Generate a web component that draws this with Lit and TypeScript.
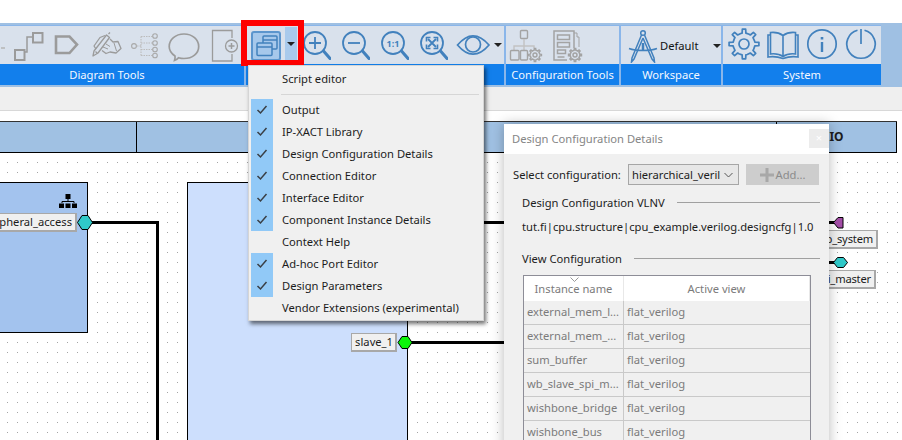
import { LitElement, html, css } from 'lit'
import { customElement } from 'lit/decorators.js'

// builds a cog outline centred on cx,cy
const gearPath = (cx: number, cy: number, ro: number, ri: number, teeth: number) => {
  const step = (Math.PI * 2) / teeth
  const pts: string[] = []
  for (let i = 0; i < teeth; i++) {
    const a = i * step - Math.PI / 2
    const w = step * 0.2
    const list: [number, number][] = [
      [ri, a - step / 2 + w * 0.6],
      [ri, a - w * 1.1],
      [ro, a - w * 0.7],
      [ro, a + w * 0.7],
      [ri, a + w * 1.1],
    ]
    for (const [r, t] of list) {
      pts.push(`${(cx + r * Math.cos(t)).toFixed(2)} ${(cy + r * Math.sin(t)).toFixed(2)}`)
    }
  }
  return 'M' + pts.join('L') + 'Z'
}

const GRAY = '#9b9b9b'
const BLUE = '#4281bd'

const stub = html`<svg width="32" height="32" viewBox="0 0 32 32">
  <path d="M28 19h4" stroke="#b5b5b5" stroke-width="1.5" fill="none" />
</svg>`

const connector = html`<svg width="32" height="32" viewBox="0 0 32 32" fill="none" stroke=${GRAY} stroke-width="2">
  <rect x="3" y="21" width="9.5" height="10" />
  <rect x="21" y="4" width="9.5" height="9.5" />
  <path d="M12 23h3V8h6" stroke-width="1.5" />
</svg>`

const tag = html`<svg width="32" height="32" viewBox="0 0 32 32" fill="none" stroke=${GRAY} stroke-width="2.6">
  <path d="M5 7.500h13.500l7.500 8-7.500 8.500H5z" />
</svg>`

const signHand = html`<svg width="32" height="32" viewBox="0 0 32 32" fill="none" stroke=${GRAY} stroke-width="1.300" stroke-linejoin="round">
  <path d="M3 27l1-5L16.500 6l3 2.500L8 24z" />
  <path d="M18.500 5l1.500-1.500M5.500 22.500l2 2" />
  <path d="M6 20L4 17 10 8.500l5-2M20 10l3 3 5-.5 3 7-5 4.500-6-1-4 1.500-4-3" />
  <path d="M13 18l5 2M16 15l4 2.500M24 14l2.500 8" stroke-width="1" />
</svg>`

const tree = html`<svg width="32" height="32" viewBox="0 0 32 32" fill="none" stroke="#a9a9a9" stroke-width="1.100">
  <circle cx="5" cy="17" r="2.400" />
  <path d="M8 17h4M12 7.500v19M12 7.500h12M12 14h12M12 20.500h12M12 26.500h12" stroke="#bcbcbc" stroke-dasharray="1.500 1" />
  <circle cx="26" cy="7" r="2.300" />
  <circle cx="26" cy="14" r="2.300" />
  <circle cx="26" cy="20.500" r="2.300" />
  <circle cx="26" cy="26.500" r="2.300" />
</svg>`

const bubble = html`<svg width="32" height="34" viewBox="0 0 32 34" fill="none" stroke=${GRAY} stroke-width="1.700">
  <path d="M7 27c-3.500-2.300-5.800-5.500-5.800-9.500C1.200 10.500 7.500 5 16 5s14.700 5.500 14.700 12.500S24.500 29.500 16 29.500c-2 0-3.800-.3-5.500-.8C9.500 30 8.500 31 6.500 31.500 7 30 7.300 28.500 7 27z" />
</svg>`

const pagePlus = html`<svg width="32" height="34" viewBox="0 0 32 34" fill="none" stroke=${GRAY} stroke-width="1.300">
  <path d="M25 9V1.500H5.500V32H25v-7" />
  <circle cx="24.500" cy="17" r="6" />
  <path d="M21.500 17h6M24.500 14v6" stroke-width="1.500" />
</svg>`

const windows = html`<svg width="28" height="28" viewBox="0 0 28 28" fill="none" stroke=${BLUE} stroke-width="1.500">
  <rect x="11" y="4" width="14" height="13" rx="1" />
  <path d="M11 8h14" />
  <rect x="5" y="11" width="15" height="12.500" rx="1" fill="#a6c8eb" />
  <path d="M5 15h15" />
</svg>`

const lens = (inner: unknown) => html`<svg width="32" height="32" viewBox="0 0 32 32" fill="none" stroke=${BLUE} stroke-width="1.800">
  <circle cx="16" cy="14" r="11" />
  <path d="M24.500 22l6.500 7.500" stroke-width="3" stroke-linecap="round" />
  ${inner}
</svg>`

const zoomIn = lens(html`<svg x="0" y="0" overflow="visible"><path d="M10 14h12M16 8v12" /></svg>`)
const zoomOut = lens(html`<svg x="0" y="0" overflow="visible"><path d="M10 14h12" /></svg>`)
const zoomOne = lens(
  html`<svg x="0" y="0" overflow="visible"><text x="16" y="17.500" text-anchor="middle" class="ratio">1:1</text></svg>`
)
const zoomFit = lens(
  html`<svg x="0" y="0" overflow="visible"><path d="M12 10l8 8M20 10l-8 8" /><path d="M10.500 12.500v-4h4M17.500 8.500h4v4M21.500 15.500v4h-4M14.500 19.500h-4v-4" stroke-width="1.600" /></svg>`
)

const eye = html`<svg width="36" height="32" viewBox="0 0 36 32" fill="none" stroke=${BLUE} stroke-width="1.700">
  <path d="M2.500 16C8 9.500 13 6.800 18 6.800S28.500 9.500 34 16c-5.500 6.500-11 9.200-16 9.200S8 22.500 2.500 16z" />
  <circle cx="18" cy="15.500" r="7.500" />
</svg>`

const gearSmall = (cx: number, cy: number) => html`<svg x="0" y="0" overflow="visible">
  <path d=${gearPath(cx, cy, 6.500, 4.800, 8)} />
  <circle cx=${cx} cy=${cy} r="2" />
</svg>`

const cfgTree = html`<svg width="36" height="34" viewBox="0 0 36 34" fill="none" stroke="#a3a3a3" stroke-width="1.400">
  <rect x="11.500" y="1.500" width="7" height="8" rx="1" />
  <path d="M15 10v7M5 21v-4h20v2M15 17v4" stroke="#c2c2c2" />
  <rect x="1.500" y="21.500" width="8.500" height="9.500" rx="1" />
  <rect x="11.500" y="21.500" width="7" height="9.500" rx="1" />
  ${gearSmall(26, 26)}
</svg>`

const cfgDoc = html`<svg width="34" height="34" viewBox="0 0 34 34" fill="none" stroke="#a3a3a3" stroke-width="1.500">
  <path d="M22 19V2H2v29h13" />
  <path d="M22 4h3v4h2v10" stroke-width="1" />
  <rect x="5.500" y="6" width="12" height="4.500" />
  <rect x="5.500" y="13.500" width="12" height="4.500" />
  <rect x="5.500" y="21" width="8" height="3.500" />
  <path d="M5.500 28h7" />
  ${gearSmall(23, 26)}
</svg>`

const compass = html`<svg width="30" height="34" viewBox="0 0 30 34" fill="none" stroke=${BLUE} stroke-width="1.500">
  <circle cx="15" cy="4" r="2.300" />
  <path d="M13.500 6L4 29l-.5 4 2.500-3L15 9M16.500 6L26 29l.5 4-2.500-3L15 9" />
  <path d="M1 19.500c4 1.500 8 2 14 2s10-.5 14-2" />
  <path d="M15 14v7" stroke-width="2.500" />
</svg>`

const bigGear = html`<svg width="32" height="32" viewBox="0 0 32 32" fill="none" stroke=${BLUE} stroke-width="1.700">
  <path d=${gearPath(16, 16, 15, 11, 8)} stroke-linejoin="round" />
  <circle cx="16" cy="16" r="5" />
</svg>`

const book = html`<svg width="32" height="32" viewBox="0 0 32 32" fill="none" stroke=${BLUE} stroke-width="1.600">
  <path d="M16 7.500C12 4.500 8 4 3.500 4.500V26c4.500-.5 9 0 12.500 2.500 3.500-2.500 8-3 12.500-2.500V4.500C24 4 20 4.500 16 7.500zM16 7.500v21" />
  <path d="M3.500 7H1v22c5-.8 10-.3 15 1.500 5-1.800 10-2.300 15-1.500V7h-2.500" />
</svg>`

const info = html`<svg width="32" height="32" viewBox="0 0 32 32" fill="none" stroke=${BLUE} stroke-width="1.700">
  <circle cx="16" cy="16" r="14.200" />
  <path d="M16 14v10" stroke-width="2.400" />
  <path d="M16 9v2.500" stroke-width="2.600" />
</svg>`

const power = html`<svg width="32" height="32" viewBox="0 0 32 32" fill="none" stroke=${BLUE} stroke-width="1.700">
  <path d="M12.500 2.300A14.200 14.200 0 1 0 19.500 2.300" />
  <path d="M16 1v15" />
</svg>`

const caret = html`<span class="caret"></span>`

const menuItems: [string, boolean][] = [
  ['Output', true],
  ['IP-XACT Library', true],
  ['Design Configuration Details', true],
  ['Connection Editor', true],
  ['Interface Editor', true],
  ['Component Instance Details', true],
  ['Context Help', false],
  ['Ad-hoc Port Editor', true],
  ['Design Parameters', true],
  ['Vendor Extensions (experimental)', false],
]

const instances = [
  'external_mem_l...',
  'external_mem_...',
  'sum_buffer',
  'wb_slave_spi_m...',
  'wishbone_bridge',
  'wishbone_bus',
]

@customElement('app-root')
export class AppRoot extends LitElement {
  static styles = css`
    :host {
      display: block;
      position: relative;
      width: 902px;
      height: 440px;
      overflow: hidden;
      background: #fff;
      font: 11.2px 'Noto Sans', sans-serif;
      color: #1c1c1c;
    }
    .ribbon {
      display: flex;
      margin-top: 23px;
      height: 64px;
      padding-top: 2px;
      box-sizing: border-box;
      background: #9fc0e3;
    }
    .group {
      display: flex;
      flex-direction: column;
      height: 60px;
      box-sizing: border-box;
      border-right: 2px solid #8ab6ea;
    }
    .tools {
      display: flex;
      align-items: flex-start;
      height: 39px;
      box-sizing: border-box;
      padding-top: 3px;
      background: #d9e1ec;
      border-top: 1px solid #8ab6ea;
    }
    .tools svg {
      flex: none;
      display: block;
    }
    .label {
      height: 21px;
      line-height: 22px;
      text-align: center;
      color: #f4f8ff;
      background: #127fec;
    }
    .diagram {
      width: 276px;
      margin-left: -30px;
    }
    .diagram .tools {
      gap: 7px;
      padding-left: 3px;
    }
    .view {
      width: 260px;
    }
    .view .tools {
      padding-left: 0;
    }
    .win-btn {
      flex: none;
      display: flex;
      align-items: center;
      justify-content: center;
      box-sizing: border-box;
      width: 30px;
      height: 30px;
      margin: 2px 0 0 5px;
      background: #a6c8eb;
      border: 2px solid #5b95cd;
      border-radius: 3px;
    }
    .win-drop {
      flex: none;
      display: flex;
      align-items: center;
      justify-content: center;
      width: 12px;
      height: 34px;
      margin: -2px 2px 0 4px;
      background: #a9caec;
    }
    .view .zoomers {
      display: flex;
      gap: 7px;
    }
    .caret {
      flex: none;
      width: 0;
      height: 0;
      border: 4px solid transparent;
      border-top: 4px solid #222;
      border-bottom: 0;
    }
    .view .caret.eye-caret {
      margin: 14px 0 0 3px;
    }
    .config {
      width: 115px;
    }
    .config .tools {
      padding-left: 3px;
      gap: 7px;
    }
    .workspace {
      width: 102px;
    }
    .workspace .tools {
      padding-left: 7px;
    }
    .workspace .name {
      width: 54px;
      margin: 9px 0 0 2px;
      color: #111;
    }
    .workspace .caret {
      margin: 15px 0 0 0;
    }
    .system {
      width: 158px;
      border-right: 0;
    }
    .system .tools {
      gap: 7px;
      padding: 2px 0 0 5px;
    }
    .subbar {
      height: 23px;
      background: #efefef;
      border-bottom: 1px solid #d8d8d8;
    }
    .headers {
      display: flex;
      margin-top: 10px;
      width: 897px;
      height: 32px;
      box-sizing: border-box;
      background: #a0c1e3;
      border-top: 1px solid #333;
      border-bottom: 1px solid #000;
    }
    .col {
      flex: none;
      box-sizing: border-box;
      border-right: 1.500px solid #000;
      font: 700 12px/30px 'Noto Sans', sans-serif;
      text-align: center;
    }
    .canvas {
      position: relative;
      height: 288px;
      width: 898px;
      background-image: radial-gradient(circle at 0.5px 0.5px, #a4a4a4 0.6px, transparent 0.6px);
      background-size: 10px 10px;
      background-position: 7px 9px;
    }
    .block {
      position: absolute;
      box-sizing: border-box;
      border: 1px solid #000;
    }
    .block.left {
      left: -20px;
      top: 29px;
      width: 108px;
      height: 151px;
      background: #a3c3ee;
    }
    .block.right {
      left: 187px;
      top: 29px;
      width: 221px;
      height: 300px;
      background: #cddffd;
    }
    .hier {
      position: absolute;
      left: 59px;
      top: 41px;
    }
    .wires {
      position: absolute;
      left: 0;
      top: 0;
    }
    .pin {
      position: absolute;
      box-sizing: border-box;
      height: 19px;
      line-height: 15px;
      padding: 0 3px 0 4px;
      background: #f0f0f0;
      border: 1px solid #a8a8a8;
      border-width: 1px 2px 2px 1px;
      white-space: nowrap;
    }
    .pin.access {
      right: 821px;
      top: 60px;
    }
    .pin.slave {
      right: 501px;
      top: 180px;
      padding: 0 2px 0 3px;
    }
    .pin.sys {
      right: 20px;
      top: 77px;
      letter-spacing: -0.2px;
    }
    .pin.mst {
      right: 22px;
      top: 117px;
      letter-spacing: -0.2px;
    }
    .highlight {
      position: absolute;
      left: 241px;
      top: 20px;
      width: 63px;
      height: 46px;
      box-sizing: border-box;
      border: 6px solid #fe0000;
    }
    .menu {
      position: absolute;
      left: 248px;
      top: 65px;
      width: 236px;
      box-sizing: border-box;
      padding: 2px 2px 1px 2px;
      background: #f0f0f0;
      border: 1px solid #d5d5d5;
      box-shadow: 2px 3px 4px rgba(0, 0, 0, 0.55);
    }
    .item {
      display: flex;
      align-items: center;
      height: 22px;
    }
    .item-text {
      margin-top: -2px;
    }
    .check {
      flex: none;
      display: flex;
      align-items: center;
      justify-content: center;
      width: 22px;
      height: 22px;
      margin-right: 9px;
    }
    .on .check {
      background: #91c9f7;
    }
    .rule {
      height: 1px;
      margin: 4px 2px 4px 30px;
      background: #d6d6d6;
    }
    .dialog {
      position: absolute;
      left: 504px;
      top: 124px;
      width: 325px;
      height: 330px;
      background: #f0f0f0;
      box-shadow: 0 0 12px rgba(0, 0, 0, 0.28);
    }
    .title {
      display: flex;
      align-items: center;
      justify-content: space-between;
      box-sizing: border-box;
      height: 30px;
      padding: 0 0 2px 8px;
      background: #fff;
      color: #858585;
    }
    .close {
      width: 20px;
      height: 19px;
      line-height: 18px;
      text-align: center;
      color: #fff;
      background: #ececec;
    }
    .select-row {
      display: flex;
      align-items: center;
      margin: 10px 10px 0 9px;
      height: 21px;
    }
    .select-label {
      flex: none;
      width: 115px;
      white-space: nowrap;
    }
    .select {
      flex: none;
      display: flex;
      align-items: center;
      justify-content: space-between;
      box-sizing: border-box;
      width: 111px;
      height: 21px;
      padding: 0 5px 0 3px;
      border: 1px solid #a6a6a6;
      background: #e7e7e7;
      white-space: nowrap;
    }
    .add {
      flex: none;
      display: flex;
      align-items: center;
      justify-content: center;
      gap: 2px;
      width: 73px;
      height: 21px;
      margin-left: 7px;
      color: #8b8b8b;
      background: #cdcdcd;
    }
    .section {
      display: flex;
      align-items: center;
      gap: 12px;
      margin: 0 9px 0 18px;
      height: 18px;
    }
    .section::after {
      content: '';
      flex: 1;
      height: 1px;
      background: #a0a0a0;
    }
    .first {
      margin-top: 8px;
    }
    .vlnv {
      margin: 7px 0 0 18px;
      height: 18px;
      line-height: 18px;
      white-space: nowrap;
    }
    .second {
      margin-top: 13px;
    }
    .table {
      margin: 8px 0 0 19px;
      width: 288px;
      box-sizing: border-box;
      border: 1px solid #8d8d97;
      color: #7b7b7b;
    }
    .row {
      display: grid;
      grid-template-columns: 100px 1fr;
      height: 24px;
      line-height: 21px;
      box-sizing: border-box;
      border-bottom: 1px solid #c9c9c9;
    }
    .row > div {
      padding-left: 3px;
      border-right: 1px solid #c9c9c9;
      white-space: nowrap;
      overflow: hidden;
    }
    .row > div:last-child {
      border-right: 0;
    }
    .row.head {
      position: relative;
      height: 25px;
      line-height: 25px;
      background: #fff;
      border-bottom: 0;
    }
    .row.head > div {
      padding: 0;
      text-align: center;
      border-right-color: #e8e8e8;
    }
    .sort {
      position: absolute;
      left: 46px;
      top: 1px;
    }
    .ratio {
      font: 700 9px 'Noto Sans', sans-serif;
      fill: #4281bd;
      stroke: none;
    }
  `

  render() {
    return html`
      <div class="ribbon">
        <div class="group diagram">
          <div class="tools">${stub}${connector}${tag}${signHand}${tree}${bubble}${pagePlus}</div>
          <div class="label">Diagram Tools</div>
        </div>
        <div class="group view">
          <div class="tools">
            <div class="win-btn">${windows}</div>
            <div class="win-drop">${caret}</div>
            <div class="zoomers">${zoomIn}${zoomOut}${zoomOne}${zoomFit}${eye}</div>
            <span class="caret eye-caret"></span>
          </div>
          <div class="label">View Tools</div>
        </div>
        <div class="group config">
          <div class="tools">${cfgTree}${cfgDoc}</div>
          <div class="label">Configuration Tools</div>
        </div>
        <div class="group workspace">
          <div class="tools">
            ${compass}
            <div class="name">Default</div>
            ${caret}
          </div>
          <div class="label">Workspace</div>
        </div>
        <div class="group system">
          <div class="tools">${bigGear}${book}${info}${power}</div>
          <div class="label">System</div>
        </div>
      </div>
      <div class="subbar"></div>
      <div class="headers">
        <div class="col" style="width:137px"></div>
        <div class="col" style="width:320px"></div>
        <div class="col" style="width:320px"></div>
        <div class="col" style="width:120px">IO</div>
      </div>
      <div class="canvas">
        <div class="block left"></div>
        <div class="block right"></div>
        <svg class="hier" width="18" height="14" viewBox="0 0 18 14">
          <rect x="6.500" y="0" width="5" height="5" />
          <path d="M9 5v3M3 9V7.500h12V9" stroke="#000" fill="none" />
          <rect x="0" y="9.500" width="5" height="4.500" />
          <rect x="6.500" y="9.500" width="5" height="4.500" />
          <rect x="13" y="9.500" width="5" height="4.500" />
        </svg>
        <svg class="wires" width="898" height="288" viewBox="0 0 898 288" fill="none" stroke="#000">
          <path d="M92 69.500h65.500V288" stroke-width="3" />
          <path d="M410 69.500h100M410 189.500h100" stroke-width="3" />
          <path d="M825 69.500h10M825 109.500h10" stroke-width="3" />
          <polygon points="77.500,69.500 82,62.500 88,62.500 92.500,69.500 88,76.500 82,76.500" fill="#2fc9c9" stroke-width="1" />
          <polygon points="398,189.500 402,183.500 408,183.500 412,189.500 408,195.500 402,195.500" fill="#0bf50b" stroke-width="1" />
          <polygon points="833.500,69.500 838,64.500 843,64.500 843,75 838,75" fill="#a44ea8" stroke-width="1" />
          <polygon points="833.500,109.500 837.500,104.500 843.500,104.500 847.500,109.500 843.500,114.500 837.500,114.500" fill="#2fc9c9" stroke-width="1" />
        </svg>
        <div class="pin access">pheral_access</div>
        <div class="pin slave">slave_1</div>
        <div class="pin sys">p_system</div>
        <div class="pin mst">i_master</div>
      </div>

      <div class="highlight"></div>

      <div class="menu">
        <div class="item"><span class="check"></span><span class="item-text">Script editor</span></div>
        <div class="rule"></div>
        ${menuItems.map(
          ([name, on]) => html`<div class="item ${on ? 'on' : ''}">
            <span class="check">
              ${on
                ? html`<svg width="12" height="10" viewBox="0 0 12 10" fill="none" stroke="#3a3f45" stroke-width="1.500">
                    <path d="M1.500 5l3 3 6-7" />
                  </svg>`
                : ''}
            </span>
            <span class="item-text">${name}</span>
          </div>`
        )}
      </div>

      <div class="dialog">
        <div class="title">Design Configuration Details<span class="close">×</span></div>
        <div class="select-row">
          <span class="select-label">Select configuration:</span>
          <div class="select">
            hierarchical_veril
            <svg width="9" height="6" viewBox="0 0 9 6" fill="none" stroke="#555">
              <path d="M.5 1l4 4 4-4" />
            </svg>
          </div>
          <div class="add">
            <svg width="14" height="14" viewBox="0 0 14 14" fill="none" stroke="#a8a8a8" stroke-width="3">
              <path d="M0 7h14M7 0v14" />
            </svg>
            Add...
          </div>
        </div>
        <div class="section first">Design Configuration VLNV</div>
        <div class="vlnv">tut.fi|cpu.structure|cpu_example.verilog.designcfg|1.0</div>
        <div class="section second">View Configuration</div>
        <div class="table">
          <div class="row head">
            <div>Instance name</div>
            <div>Active view</div>
            <svg class="sort" width="9" height="5" viewBox="0 0 9 5" fill="none" stroke="#999">
              <path d="M.5.5l4 4 4-4" />
            </svg>
          </div>
          ${instances.map(
            (name) => html`<div class="row">
              <div>${name}</div>
              <div>flat_verilog</div>
            </div>`
          )}
        </div>
      </div>
    `
  }
}
